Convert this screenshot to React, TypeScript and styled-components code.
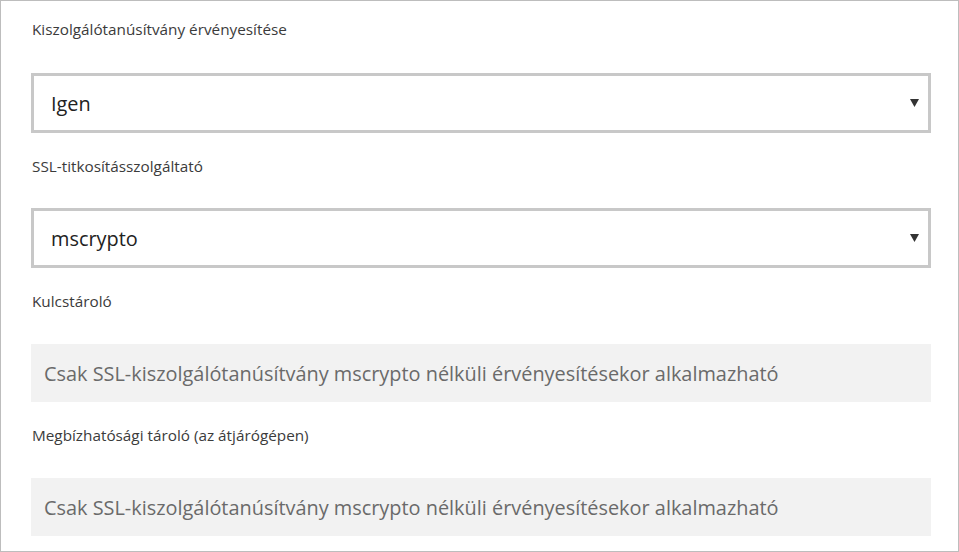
import React from "react";
import styled, { createGlobalStyle } from "styled-components";

const Global = createGlobalStyle`
  html, body { margin: 0; padding: 0; background: #ffffff; }
  body { font-family: "Open Sans", "Noto Sans", sans-serif; }
  * { box-sizing: border-box; }
`;

const Frame = styled.div`
  width: 959px;
  height: 552px;
  border: 1px solid #bdbdbd;
  padding: 18px 0 0 30px;
  display: flex;
  flex-direction: column;
  gap: 23px;
  overflow: hidden;
`;

const Field = styled.div`
  display: flex;
  flex-direction: column;
  width: 900px;
`;

const Label = styled.div<{ $gap: number }>`
  font-size: 15.3px;
  line-height: 20px;
  color: #3b3b3b;
  padding-left: 1px;
  margin-bottom: ${(p) => p.$gap}px;
  white-space: nowrap;
`;

const SelectBox = styled.div`
  height: 60px;
  border: 3px solid #c8c8c8;
  background: #ffffff;
  display: flex;
  align-items: center;
  justify-content: space-between;
  padding: 0 9px 0 17px;
`;

const SelectValue = styled.span`
  font-size: 19.9px;
  color: #222222;
  white-space: nowrap;
`;

const Arrow = styled.svg`
  width: 9px;
  height: 8px;
  display: block;
  fill: #333333;
`;

const ReadOnlyBox = styled.div`
  height: 58px;
  background: #f2f2f2;
  display: flex;
  align-items: center;
  padding: 0 13px;
`;

const ReadOnlyText = styled.span`
  font-size: 19.9px;
  color: #6a6a6a;
  white-space: nowrap;
`;

const Caret = () => (
  <Arrow viewBox="0 0 9 8">
    <polygon points="0,0 9,0 4.5,8" />
  </Arrow>
);

const disabledText =
  "Csak SSL-kiszolgálótanúsítvány mscrypto nélküli érvényesítésekor alkalmazható";

export default function App() {
  return (
    <>
      <Global />
      <Frame>
        <Field>
          <Label $gap={34}>Kiszolgálótanúsítvány érvényesítése</Label>
          <SelectBox>
            <SelectValue>Igen</SelectValue>
            <Caret />
          </SelectBox>
        </Field>
        <Field>
          <Label $gap={32}>SSL-titkosításszolgáltató</Label>
          <SelectBox>
            <SelectValue>mscrypto</SelectValue>
            <Caret />
          </SelectBox>
        </Field>
        <Field>
          <Label $gap={33}>Kulcstároló</Label>
          <ReadOnlyBox>
            <ReadOnlyText>{disabledText}</ReadOnlyText>
          </ReadOnlyBox>
        </Field>
        <Field>
          <Label $gap={33}>Megbízhatósági tároló (az átjárógépen)</Label>
          <ReadOnlyBox>
            <ReadOnlyText>{disabledText}</ReadOnlyText>
          </ReadOnlyBox>
        </Field>
      </Frame>
    </>
  );
}
